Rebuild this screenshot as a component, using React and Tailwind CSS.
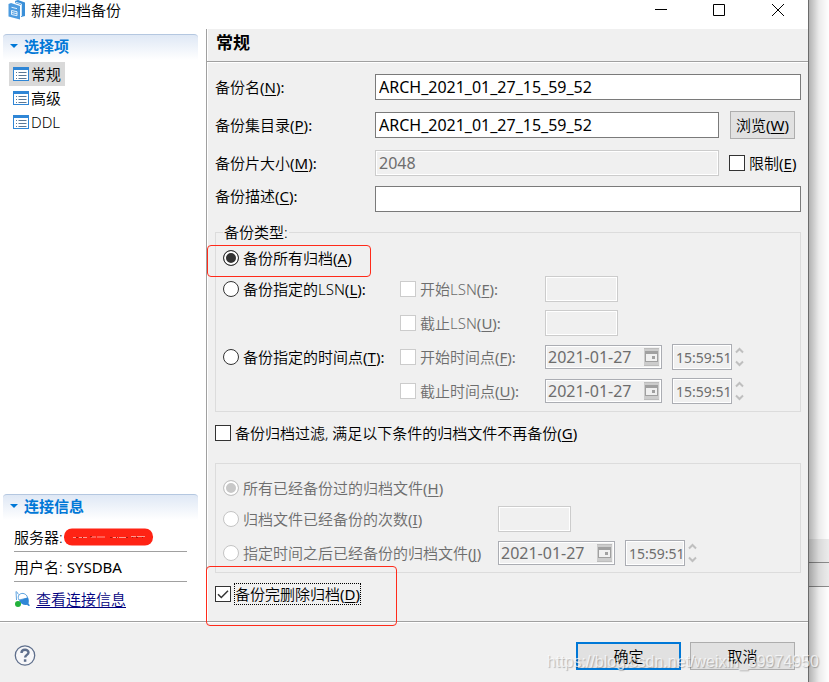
import React, { useState } from 'react';

// mnemonic letter shown as (X)
const Key = ({ text, k, colon }) => (
    <span className="whitespace-nowrap">
        {text}
        <span className="font-normal">(<u className="underline-offset-2">{k}</u>){colon && ':'}</span>
    </span>
);

const CheckBox = ({ children, disabled, focused, ...rest }) => (
    <label className={`flex items-center gap-1 ${disabled ? 'text-[#6d6d6d]' : 'text-black'}`}>
        <span className="relative flex w-4 h-4 shrink-0">
            <input
                type="checkbox"
                disabled={disabled}
                className="peer appearance-none w-4 h-4 bg-white border border-[#333333] disabled:border-[#cccccc]"
                {...rest}
            />
            <svg viewBox="0 0 16 16" className="hidden peer-checked:block absolute inset-0 pointer-events-none" fill="none" stroke="#333" strokeWidth="1.5">
                <path d="M3 8.2l3.3 3.3L13 4.8" />
            </svg>
        </span>
        <span className={focused ? 'outline-1 outline-dotted outline-black' : ''}>{children}</span>
    </label>
);

const Radio = ({ children, disabled, ...rest }) => (
    <label className={`flex items-center gap-1 ${disabled ? 'text-[#6d6d6d]' : 'text-black'}`}>
        <input
            type="radio"
            disabled={disabled}
            className="appearance-none w-4 h-4 shrink-0 rounded-full bg-white border border-[#333333] checked:bg-[#333333] checked:shadow-[inset_0_0_0_2px_#fff] disabled:border-[#c4c4c4] disabled:checked:bg-[#c8c8c8]"
            {...rest}
        />
        {children}
    </label>
);

const TextField = ({ className = '', ...rest }) => (
    <input
        type="text"
        className={`h-[26px] min-w-0 px-[3px] text-[16px] leading-5 font-normal bg-white border border-[#7a7a7a] disabled:bg-[#f0f0f0] disabled:border-[#cccccc] disabled:text-[#6d6d6d] disabled:shadow-[inset_0_0_0_1px_#fff] ${className}`}
        {...rest}
    />
);

const DateTime = ({ name }) => (
    <div className="flex items-center font-normal text-[#6d6d6d]">
        <div className="flex items-center w-[117px] h-6 border border-[#abadb3] shadow-[inset_0_0_0_1px_#fff] pr-[2px]">
            <input type="text" disabled defaultValue="2021-01-27" aria-label={`${name}日期`} className="flex-1 min-w-0 pl-[2px] text-[16px] leading-5" />
            <button type="button" disabled aria-label="选择日期" className="w-[15px] h-[18px] bg-[#cccccc]">
                <svg viewBox="0 0 15 18" width="15" height="18">
                    <path d="M0 .5h15M0 17.5h15" stroke="#bdbdbd" />
                    <rect x="1.5" y="4.5" width="12" height="9" fill="#f0f0f0" stroke="#a0a0a0" />
                    <path d="M1 3h13v3H1z" fill="#a0a0a0" />
                    <path d="M8 8h3v3H8z" fill="#a0a0a0" />
                </svg>
            </button>
        </div>
        <input
            type="text"
            disabled
            defaultValue="15:59:51"
            aria-label={`${name}时间`}
            className="ml-[10px] w-[60px] h-[26px] pl-[3px] text-[14px] leading-5 border border-[#abadb3] shadow-[inset_0_0_0_1px_#fff]"
        />
        <svg viewBox="0 0 9 20" width="9" height="20" className="ml-[3px]" fill="none" stroke="#bfbfbf" strokeWidth="2">
            <path d="M1 5.5l3.5-3.5L8 5.5M1 14.5l3.5 3.5L8 14.5" />
        </svg>
    </div>
);

const Section = ({ title, children }) => (
    <section>
        <h2 className="flex items-center gap-[5px] ml-[3px] mr-2 h-[26px] pl-[6px] pb-[3px] text-[15px] font-bold text-[#0078d7] rounded-t border-t border-[#b4c7e0] bg-gradient-to-b from-[#dfe8f5] to-white">
            <svg viewBox="0 0 10 6" width="10" height="6"><path d="M1 1h8L5 5z" fill="#0078d7" /></svg>
            {title}
        </h2>
        {children}
    </section>
);

const ListIcon = () => (
    <svg viewBox="0 0 16 14" width="16" height="14">
        <rect x=".5" y=".5" width="15" height="13" fill="#fff" stroke="#2f86d6" />
        <path d="M0 0h16v3H0z" fill="#2f86d6" />
        <path d="M3 5.5h1M3 8.5h1M3 11.5h1M5.500 5.500h8M5.500 8.500h8M5.500 11.500h8" stroke="#5a7896" />
    </svg>
);

const menu = ['常规', '高级', 'DDL'];

const App = () => {
    const [active, setActive] = useState('常规');

    return (
        <div
            className="relative flex min-h-screen bg-white text-black text-[15px] leading-5 font-[350] overflow-hidden"
            style={{ fontFamily: '"Noto Sans", "Noto Sans CJK SC", sans-serif' }}
        >
            <div className="flex-1 min-w-0 flex flex-col border-r border-[#6b6b6b]">
                {/* Title bar */}
                <header className="flex items-center h-[29px] pb-[10px] pl-2 bg-white">
                    <svg viewBox="0 0 19 20" width="19" height="20">
                        <path d="M7 1l3-1 7 2.500V16l-4 1V5L7 3z" fill="#3a8fd8" />
                        <path d="M7.500 2.200L13.500 4v12" fill="none" stroke="#cfe5f8" />
                        <path d="M.5 4L3 3l9 3v13.500L.5 16.500z" fill="#4c9be0" />
                        <path d="M3.500 7.300l5.500 1.300M3.500 10.500l5.500 1.200v4L3.500 14.500zM3.500 12.500l5.500 1.200" fill="none" stroke="#e4f1fc" />
                    </svg>
                    <h1 className="ml-1 flex-1">新建归档备份</h1>
                    <div className="flex mr-3">
                        <button type="button" aria-label="最小化" className="w-9 h-5 flex items-center justify-center">
                            <svg viewBox="0 0 14 14" width="14" height="14" stroke="#000"><path d="M0 6.500h12" /></svg>
                        </button>
                        <button type="button" aria-label="最大化" className="ml-[22px] w-9 h-5 flex items-center justify-center">
                            <svg viewBox="0 0 14 14" width="14" height="14" fill="none" stroke="#000"><path d="M.5 1.500h11v11H.5z" /></svg>
                        </button>
                        <button type="button" aria-label="关闭" className="ml-[22px] w-9 h-5 flex items-center justify-center">
                            <svg viewBox="0 0 14 14" width="14" height="14" stroke="#000"><path d="M1 1l12 12M13 1L1 13" /></svg>
                        </button>
                    </div>
                </header>

                <div className="flex flex-1">
                    {/* Sidebar */}
                    <aside className="flex flex-col justify-between w-[206px] shrink-0 pt-[5px] pb-3 bg-white">
                        <Section title="选择项">
                            <nav className="flex flex-col items-start pt-[2px] pl-[9px]">
                                {menu.map((item) => (
                                    <button
                                        key={item}
                                        type="button"
                                        onClick={() => setActive(item)}
                                        className={`flex items-center gap-[2px] h-6 px-1 ${active === item ? 'bg-[#d9d9d9]' : ''}`}
                                    >
                                        <ListIcon />
                                        {item}
                                    </button>
                                ))}
                            </nav>
                        </Section>
                        <Section title="连接信息">
                            <div className="pl-[14px] pr-[19px]">
                                <div className="flex items-center h-8 pt-[2px] border-b border-[#a0a0a0]">
                                    服务器:
                                    <svg viewBox="0 0 90 18" width="90" height="18" className="ml-px">
                                        <rect width="89" height="17" y=".5" rx="8" fill="#ff2314" />
                                        <path d="M9 9.500h14m4-.5h16m6 .5h14m4-1h14" stroke="#ff9a90" strokeDasharray="5 1 8 2" />
                                        <path d="M12 9.500h8m6-1h4m16 1h8m8 0h18" stroke="#a8170e" strokeDasharray="2 4 1 3" />
                                    </svg>
                                </div>
                                <div className="flex items-center gap-1 h-[30px] border-b border-[#a0a0a0]">
                                    用户名: <span className="font-normal">SYSDBA</span>
                                </div>
                                <div className="flex items-center gap-[5px] pt-[7px]">
                                    <svg viewBox="0 0 17 17" width="17" height="17">
                                        <path d="M2.500.5l2 3M5 4c2-2.500 6-2 8 1l.5 2L5 9C4 7 4 5.500 5 4z" fill="#fff" stroke="#5fa3df" />
                                        <path d="M5 9.500L14 6.500c1 2 1 4 .5 6l1.500 2-1.500.5-1.500-1.200C10 14.500 6.500 13 5 9.500z" fill="#2f86d6" />
                                        <path d="M2 .5L2.500 9" fill="none" stroke="#5fa3df" />
                                        <circle cx="4" cy="13" r="3" fill="#22b13a" />
                                    </svg>
                                    <a href="#connection" className="text-[#000080] underline underline-offset-2">查看连接信息</a>
                                </div>
                            </div>
                        </Section>
                    </aside>

                    {/* Form */}
                    <main className="flex-1 min-w-0 flex flex-col bg-[#f0f0f0] border-l border-[#a0a0a0] shadow-[inset_1px_0_0_#fff]">
                        <h2 className="h-[33px] pl-[9px] pt-1 text-[17px] font-bold border-b border-[#a0a0a0] shadow-[0_1px_0_#fff]">常规</h2>
                        <form className="pl-2 pr-[7px] pt-3">
                            <div className="flex items-center">
                                <label htmlFor="name" className="w-40"><Key text="备份名" k="N" colon /></label>
                                <TextField id="name" defaultValue="ARCH_2021_01_27_15_59_52" className="flex-1" />
                            </div>
                            <div className="flex items-center mt-[11px]">
                                <label htmlFor="dir" className="w-40"><Key text="备份集目录" k="P" colon /></label>
                                <TextField id="dir" defaultValue="ARCH_2021_01_27_15_59_52" className="flex-1" />
                                <div className="w-[82px] pl-[11px]">
                                    <button type="button" className="w-[65px] h-7 bg-[#e1e1e1] border border-[#adadad]"><Key text="浏览" k="W" /></button>
                                </div>
                            </div>
                            <div className="flex items-center mt-[11px]">
                                <label htmlFor="size" className="w-40"><Key text="备份片大小" k="M" colon /></label>
                                <TextField id="size" disabled defaultValue="2048" className="flex-1" />
                                <div className="w-[82px] pl-[10px]">
                                    <CheckBox><Key text="限制" k="E" /></CheckBox>
                                </div>
                            </div>
                            <div className="flex items-start mt-[10px]">
                                <label htmlFor="desc" className="w-40"><Key text="备份描述" k="C" colon /></label>
                                <TextField id="desc" className="flex-1" />
                            </div>

                            <fieldset className="mt-[10px] px-[7px] pb-[3px] border border-[#dcdcdc]">
                                <legend className="px-px">备份类型:</legend>
                                <div className="relative flex items-center h-8">
                                    <Radio name="type" defaultChecked><Key text="备份所有归档" k="A" /></Radio>
                                    <div className="absolute -left-4 top-[3px] w-[164px] h-8 border border-[#ff2a1a] rounded pointer-events-none" />
                                </div>
                                <div className="flex items-center h-[30px] mb-[2px]">
                                    <div className="w-[177px]"><Radio name="type"><Key text="备份指定的LSN" k="L" colon /></Radio></div>
                                    <div className="w-[145px]"><CheckBox disabled><Key text="开始LSN" k="F" colon /></CheckBox></div>
                                    <TextField disabled aria-label="开始LSN" className="w-[73px]" />
                                </div>
                                <div className="flex items-center h-[34px] pl-[177px]">
                                    <div className="w-[145px]"><CheckBox disabled><Key text="截止LSN" k="U" colon /></CheckBox></div>
                                    <TextField disabled aria-label="截止LSN" className="w-[73px]" />
                                </div>
                                <div className="flex items-center h-[34px]">
                                    <div className="w-[177px]"><Radio name="type"><Key text="备份指定的时间点" k="T" colon /></Radio></div>
                                    <div className="w-[145px]"><CheckBox disabled><Key text="开始时间点" k="F" colon /></CheckBox></div>
                                    <DateTime name="开始" />
                                </div>
                                <div className="flex items-center h-[34px] pl-[177px]">
                                    <div className="w-[145px]"><CheckBox disabled><Key text="截止时间点" k="U" colon /></CheckBox></div>
                                    <DateTime name="截止" />
                                </div>
                            </fieldset>

                            <div className="flex mt-[11px]">
                                <CheckBox><Key text="备份归档过滤, 满足以下条件的归档文件不再备份" k="G" /></CheckBox>
                            </div>

                            <fieldset className="mt-5 px-[7px] pt-2 pb-[2px] border border-[#dcdcdc]">
                                <div className="flex items-center h-8">
                                    <Radio name="filter" disabled defaultChecked><Key text="所有已经备份过的归档文件" k="H" /></Radio>
                                </div>
                                <div className="flex items-center h-[30px] mb-[2px]">
                                    <div className="w-[275px]"><Radio name="filter" disabled><Key text="归档文件已经备份的次数" k="I" /></Radio></div>
                                    <TextField disabled aria-label="次数" className="w-[73px]" />
                                </div>
                                <div className="flex items-center h-[34px]">
                                    <div className="w-[275px]"><Radio name="filter" disabled><Key text="指定时间之后已经备份的归档文件" k="J" /></Radio></div>
                                    <DateTime name="过滤" />
                                </div>
                            </fieldset>

                            <div className="relative flex mt-[11px] mb-[17px]">
                                <CheckBox defaultChecked focused><Key text="备份完删除归档" k="D" /></CheckBox>
                                <div className="absolute -left-[9px] -top-[18px] w-[191px] h-[60px] border border-[#ff2a1a] rounded pointer-events-none z-10" />
                            </div>
                        </form>
                    </main>
                </div>

                {/* Buttons */}
                <footer className="flex items-center h-[61px] pt-[7px] px-[13px] bg-[#f0f0f0] border-t border-[#a0a0a0] shadow-[inset_0_1px_0_#fff]">
                    <button type="button" aria-label="帮助" className="mr-auto">
                        <svg viewBox="0 0 24 24" width="24" height="24" fill="none" stroke="#5f6f8c">
                            <circle cx="12" cy="11.500" r="9.700" strokeWidth="1.300" fill="#f7f7f9" />
                            <path d="M8.500 9c0-4.200 7-4.200 7-.5 0 2.400-3.400 2.400-3.400 5" strokeWidth="2.400" />
                            <path d="M12.100 15.300v2.500" strokeWidth="2.500" />
                        </svg>
                    </button>
                    <button type="button" className="w-[105px] h-7 bg-[#e1e1e1] border-2 border-[#0078d7]">确定</button>
                    <button type="button" className="ml-[9px] w-[105px] h-7 bg-[#e1e1e1] border border-[#adadad]">取消</button>
                </footer>
            </div>

            {/* Desktop behind the window */}
            <div className="relative w-5 shrink-0 flex flex-col bg-white">
                <div className="flex-1" />
                <div className="h-6 bg-[#ececec] border-b border-[#8c8c8c]" />
                <div className="h-6 bg-[#ececec] border-b border-[#8c8c8c]" />
                <div className="h-[95px]" />
                <div className="absolute inset-0 bg-gradient-to-r from-black/30 via-black/8 to-transparent" />
            </div>

            <div
                className="absolute right-[10px] bottom-[10px] text-[16px] text-white/70 pointer-events-none [text-shadow:1px_1px_1px_rgba(0,0,0,0.25)]"
                style={{ fontFamily: '"Liberation Sans", Arial, sans-serif' }}
            >
                https://blog.csdn.net/weixin_39974950
            </div>
        </div>
    );
};

export default App;
